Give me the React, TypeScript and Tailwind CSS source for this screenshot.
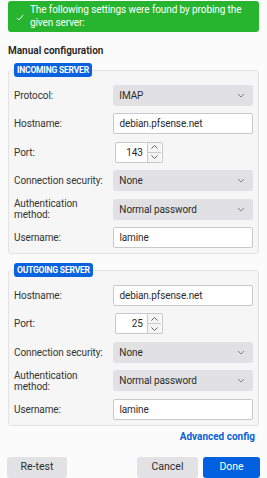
import React from "react";

const font = { fontFamily: "Roboto, 'Noto Sans', sans-serif" };

function Chevron() {
  return (
    <svg width="8" height="5" viewBox="0 0 8 5" className="shrink-0">
      <path d="M1 1 L4 4 L7 1" fill="none" stroke="#777" strokeWidth="0.9" />
    </svg>
  );
}

function Select({ value }: { value: string }) {
  return (
    <div className="flex h-[21px] w-[142px] items-center justify-between rounded-[3px] bg-[#e1e1e3] pl-[6px] pr-[8px] text-[10px] tracking-[-0.1px] text-[#2b2b2b]">
      <span>{value}</span>
      <Chevron />
    </div>
  );
}

function Input({ value }: { value: string }) {
  return (
    <div className="flex h-[21px] w-[142px] items-center rounded-[2px] border border-[#c9c9cc] bg-white pl-[5px] text-[10px] tracking-[-0.1px] text-[#2b2b2b]">
      {value}
    </div>
  );
}

function Port({ value }: { value: string }) {
  return (
    <div className="flex h-[21px] w-[48px] items-center rounded-[2px] border border-[#c9c9cc] bg-white">
      <div className="flex-1 pr-[4px] text-right text-[10px] text-[#2b2b2b]">{value}</div>
      <div className="mr-[1px] flex h-[19px] w-[14px] flex-col border-l border-[#c9c9cc]">
        <div className="flex flex-1 items-center justify-center border-b border-[#c9c9cc] bg-[#f4f4f5]">
          <svg width="7" height="4" viewBox="0 0 7 4">
            <path d="M0.5 3.5 L3.5 0.5 L6.5 3.5" fill="none" stroke="#555" strokeWidth="0.9" />
          </svg>
        </div>
        <div className="flex flex-1 items-center justify-center bg-[#f4f4f5]">
          <svg width="7" height="4" viewBox="0 0 7 4">
            <path d="M0.5 0.5 L3.5 3.5 L6.5 0.5" fill="none" stroke="#555" strokeWidth="0.9" />
          </svg>
        </div>
      </div>
    </div>
  );
}

function Row({ label, children }: { label: React.ReactNode; children: React.ReactNode }) {
  return (
    <div className="flex h-[21px] items-center">
      <div className="w-[101px] pr-[10px] text-[10px] leading-[11px] tracking-[-0.1px] text-[#333]">{label}</div>
      {children}
    </div>
  );
}

function Fieldset({ title, children }: { title: string; children: React.ReactNode }) {
  return (
    <div className="relative rounded-[3px] border border-[#e3e3e6] bg-[#f6f6f7] pb-[5px] pl-[5px] pr-[5px] pt-[14px]">
      <div className="absolute left-[5px] top-[-8px] flex h-[14px] items-center rounded-[3px] bg-[#0a63de] px-[3px] text-[8.5px] font-bold tracking-[-0.2px] text-white">
        {title}
      </div>
      <div className="flex flex-col gap-[7.4px]">{children}</div>
    </div>
  );
}

export default function App() {
  return (
    <div className="h-[478px] w-[267px] overflow-hidden bg-[#fbfbfc] px-[8px] pt-[1px]" style={font}>
      <div className="flex h-[31px] items-start rounded-[3px] bg-[#27b52f] pl-[8px] pr-[1px] pt-[3px] text-[10px] leading-[12.5px] tracking-[-0.1px] text-white">
        <svg width="8" height="7" viewBox="0 0 8 7" className="mr-[6px] mt-[10px] shrink-0">
          <path d="M0.8 3.8 L3 6 L7.2 0.8" fill="none" stroke="white" strokeWidth="0.9" />
        </svg>
        <div className="flex-1 whitespace-nowrap">
          The following settings were found by probing the
          <br />
          given server:
        </div>
      </div>
      <div className="mt-[11px] text-[10px] font-semibold text-[#222]">Manual configuration</div>
      <div className="mt-[12px]">
        <Fieldset title="INCOMING SERVER">
          <Row label="Protocol:"><Select value="IMAP" /></Row>
          <Row label="Hostname:"><Input value="debian.pfsense.net" /></Row>
          <Row label="Port:"><Port value="143" /></Row>
          <Row label="Connection security:"><Select value="None" /></Row>
          <Row label="Authentication method:"><Select value="Normal password" /></Row>
          <Row label="Username:"><Input value="lamine" /></Row>
        </Fieldset>
      </div>
      <div className="mt-[16px]">
        <Fieldset title="OUTGOING SERVER">
          <Row label="Hostname:"><Input value="debian.pfsense.net" /></Row>
          <Row label="Port:"><Port value="25" /></Row>
          <Row label="Connection security:"><Select value="None" /></Row>
          <Row label="Authentication method:"><Select value="Normal password" /></Row>
          <Row label="Username:"><Input value="lamine" /></Row>
        </Fieldset>
      </div>
      <div className="mt-[3px] pr-[4px] text-right text-[10px] font-bold text-[#0a5fd8]">Advanced config</div>
      <div className="mt-[13px] flex items-center">
        <div className="ml-[-1px] flex h-[21px] w-[60px] items-center justify-center rounded-[3px] bg-[#e2e2e4] text-[10.5px] text-[#2b2b2b]">Re-test</div>
        <div className="ml-auto flex h-[21px] w-[61px] items-center justify-center rounded-[3px] bg-[#e2e2e4] text-[10.5px] text-[#2b2b2b]">Cancel</div>
        <div className="ml-[5px] mr-[-1px] flex h-[21px] w-[57px] items-center justify-center rounded-[3px] bg-[#0060df] text-[10.5px] text-white">Done</div>
      </div>
    </div>
  );
}
